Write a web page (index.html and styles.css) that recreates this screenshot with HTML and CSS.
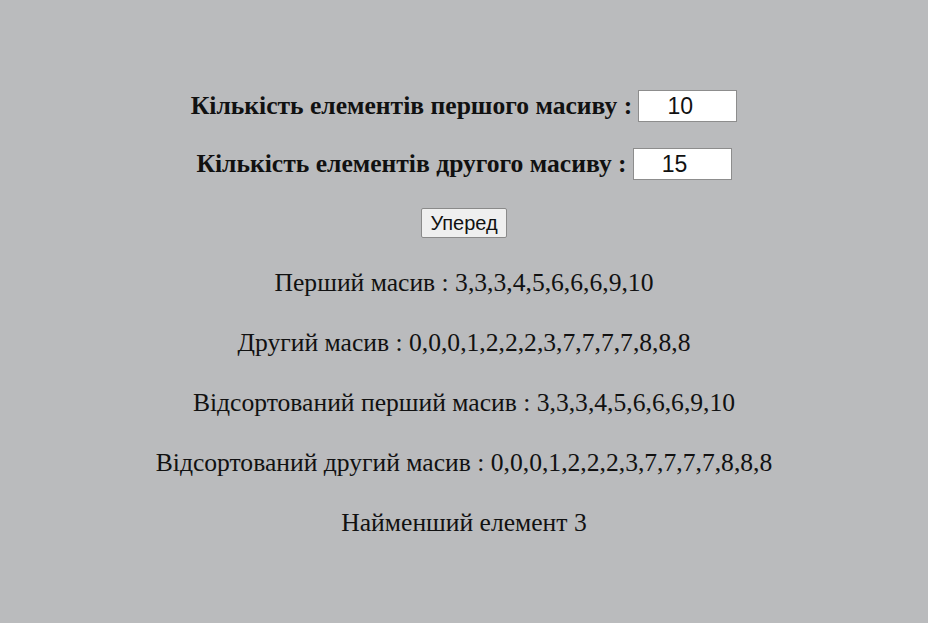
FILE: index.html
```html
<!DOCTYPE html>
<html lang="uk">
<head>
<meta charset="utf-8">
<link rel="stylesheet" href="styles.css">
</head>
<body>
<main class="page">
  <form class="form">
    <label class="field">Кількість елементів першого масиву : <input class="num" type="text" value="10"></label>
    <label class="field field-2">Кількість елементів другого масиву : <input class="num" type="text" value="15"></label>
    <button class="go" type="button">Уперед</button>
  </form>
  <div class="results">
    <p class="line">Перший масив : 3,3,3,4,5,6,6,6,9,10</p>
    <p class="line">Другий масив : 0,0,0,1,2,2,2,3,7,7,7,7,8,8,8</p>
    <p class="line">Відсортований перший масив : 3,3,3,4,5,6,6,6,9,10</p>
    <p class="line">Відсортований другий масив : 0,0,0,1,2,2,2,3,7,7,7,7,8,8,8</p>
    <p class="line">Найменший елемент 3</p>
  </div>
</main>
</body>
</html>
```
FILE: styles.css
```css
html, body {
  margin: 0;
  padding: 0;
  background: #babbbd;
  height: 100%;
}
body {
  font-family: "Liberation Serif", "Times New Roman", serif;
  color: #111;
}
.page {
  display: flex;
  flex-direction: column;
  align-items: center;
  padding-top: 90px;
}
.form {
  display: flex;
  flex-direction: column;
  align-items: center;
}
.field {
  display: flex;
  align-items: center;
  gap: 6px;
  font-weight: bold;
  font-size: 25.6px;
  height: 32px;
}
.field-2 {
  margin-top: 26px;
}
.num {
  box-sizing: border-box;
  width: 99px;
  height: 32px;
  border: 1px solid #8d8d8d;
  background: #fff;
  font-family: "Liberation Sans", Arial, sans-serif;
  font-size: 23px;
  text-align: center;
  padding: 0 15px 0 0;
  color: #111;
}
.go {
  margin-top: 28px;
  box-sizing: border-box;
  height: 30px;
  padding: 0 8px;
  font-family: "Liberation Sans", Arial, sans-serif;
  font-size: 20px;
  color: #111;
  background: #efefef;
  border: 1px solid #8a8a8a;
  border-radius: 2px;
}
.results {
  display: flex;
  flex-direction: column;
  align-items: center;
  gap: 34px;
  margin-top: 32px;
}
.line {
  margin: 0;
  font-size: 25.6px;
  line-height: 26px;
  height: 26px;
}
```
